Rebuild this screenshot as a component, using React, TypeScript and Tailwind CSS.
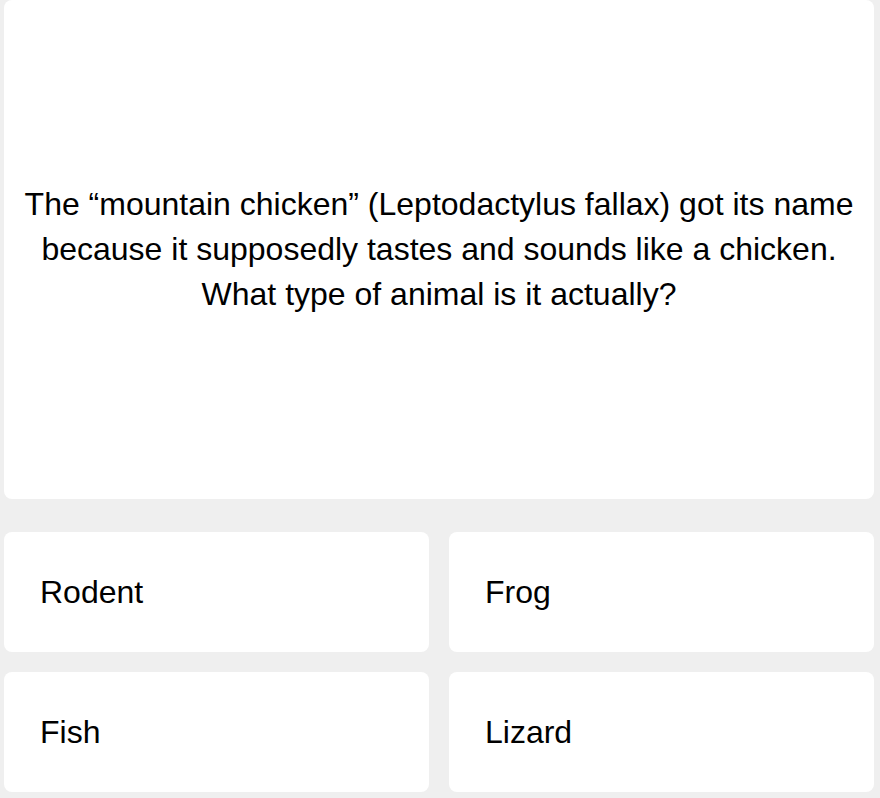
const answers = ["Rodent", "Frog", "Fish", "Lizard"];

export default function App() {
  return (
    <div
      className="min-h-screen bg-[#efefef] pl-1 pr-1.5 pb-1.5 text-black"
      style={{ fontFamily: '"Liberation Sans", Arial, sans-serif' }}
    >
      <div className="h-[499px] bg-white rounded-lg flex items-center justify-center px-4">
        <p className="text-[32px] leading-[45px] text-center">
          The “mountain chicken” (Leptodactylus fallax) got its name because it supposedly tastes and sounds like a chicken. What type of animal is it actually?
        </p>
      </div>
      <div className="grid grid-cols-2 gap-5 mt-[33px]">
        {answers.map((a) => (
          <button
            key={a}
            className="h-[120px] bg-white rounded-lg flex items-center px-9 text-[32px] text-left"
          >
            {a}
          </button>
        ))}
      </div>
    </div>
  );
}
